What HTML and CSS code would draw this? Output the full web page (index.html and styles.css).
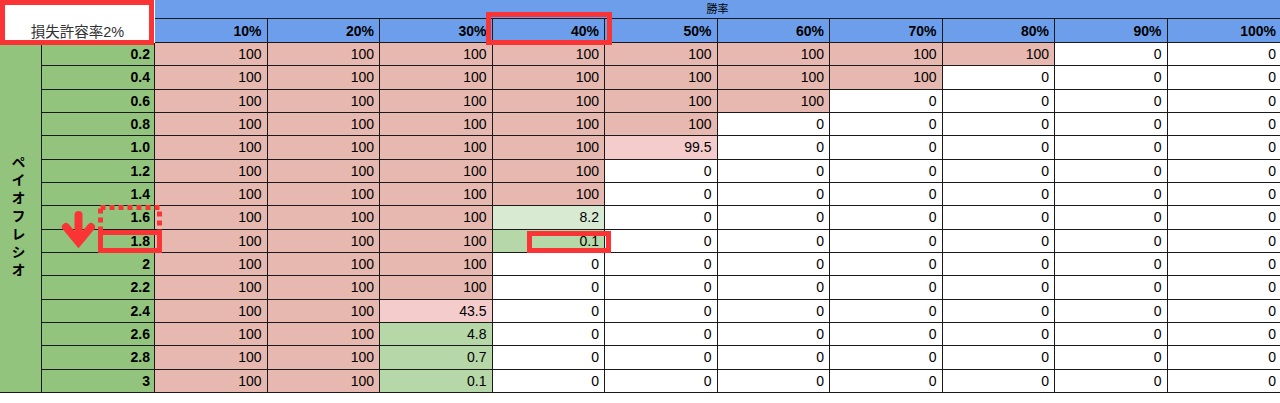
FILE: index.html
```html
<!DOCTYPE html>
<html lang="ja">
<head>
<meta charset="utf-8">
<title>損失許容率2%</title>
<link rel="stylesheet" href="styles.css">
</head>
<body>
<div class="sheet">
  <div class="grid">
    <div class="corner">損失許容率2%</div>
    <div class="title">勝率</div>
    <div class="side"><span class="side-text">ペイオフレシオ</span></div>

    <div class="h">10%</div><div class="h">20%</div><div class="h">30%</div><div class="h">40%</div><div class="h">50%</div><div class="h">60%</div><div class="h">70%</div><div class="h">80%</div><div class="h">90%</div><div class="h last">100%</div>

    <div class="lbl">0.2</div><div class="c p">100</div><div class="c p">100</div><div class="c p">100</div><div class="c p">100</div><div class="c p">100</div><div class="c p">100</div><div class="c p">100</div><div class="c p">100</div><div class="c">0</div><div class="c last">0</div>
    <div class="lbl">0.4</div><div class="c p">100</div><div class="c p">100</div><div class="c p">100</div><div class="c p">100</div><div class="c p">100</div><div class="c p">100</div><div class="c p">100</div><div class="c">0</div><div class="c">0</div><div class="c last">0</div>
    <div class="lbl">0.6</div><div class="c p">100</div><div class="c p">100</div><div class="c p">100</div><div class="c p">100</div><div class="c p">100</div><div class="c p">100</div><div class="c">0</div><div class="c">0</div><div class="c">0</div><div class="c last">0</div>
    <div class="lbl">0.8</div><div class="c p">100</div><div class="c p">100</div><div class="c p">100</div><div class="c p">100</div><div class="c p">100</div><div class="c">0</div><div class="c">0</div><div class="c">0</div><div class="c">0</div><div class="c last">0</div>
    <div class="lbl">1.0</div><div class="c p">100</div><div class="c p">100</div><div class="c p">100</div><div class="c p">100</div><div class="c lp">99.5</div><div class="c">0</div><div class="c">0</div><div class="c">0</div><div class="c">0</div><div class="c last">0</div>
    <div class="lbl">1.2</div><div class="c p">100</div><div class="c p">100</div><div class="c p">100</div><div class="c p">100</div><div class="c">0</div><div class="c">0</div><div class="c">0</div><div class="c">0</div><div class="c">0</div><div class="c last">0</div>
    <div class="lbl">1.4</div><div class="c p">100</div><div class="c p">100</div><div class="c p">100</div><div class="c p">100</div><div class="c">0</div><div class="c">0</div><div class="c">0</div><div class="c">0</div><div class="c">0</div><div class="c last">0</div>
    <div class="lbl">1.6</div><div class="c p">100</div><div class="c p">100</div><div class="c p">100</div><div class="c lg">8.2</div><div class="c">0</div><div class="c">0</div><div class="c">0</div><div class="c">0</div><div class="c">0</div><div class="c last">0</div>
    <div class="lbl">1.8</div><div class="c p">100</div><div class="c p">100</div><div class="c p">100</div><div class="c mg">0.1</div><div class="c">0</div><div class="c">0</div><div class="c">0</div><div class="c">0</div><div class="c">0</div><div class="c last">0</div>
    <div class="lbl">2</div><div class="c p">100</div><div class="c p">100</div><div class="c p">100</div><div class="c">0</div><div class="c">0</div><div class="c">0</div><div class="c">0</div><div class="c">0</div><div class="c">0</div><div class="c last">0</div>
    <div class="lbl">2.2</div><div class="c p">100</div><div class="c p">100</div><div class="c p">100</div><div class="c">0</div><div class="c">0</div><div class="c">0</div><div class="c">0</div><div class="c">0</div><div class="c">0</div><div class="c last">0</div>
    <div class="lbl">2.4</div><div class="c p">100</div><div class="c p">100</div><div class="c lp">43.5</div><div class="c">0</div><div class="c">0</div><div class="c">0</div><div class="c">0</div><div class="c">0</div><div class="c">0</div><div class="c last">0</div>
    <div class="lbl">2.6</div><div class="c p">100</div><div class="c p">100</div><div class="c mg">4.8</div><div class="c">0</div><div class="c">0</div><div class="c">0</div><div class="c">0</div><div class="c">0</div><div class="c">0</div><div class="c last">0</div>
    <div class="lbl">2.8</div><div class="c p">100</div><div class="c p">100</div><div class="c mg">0.7</div><div class="c">0</div><div class="c">0</div><div class="c">0</div><div class="c">0</div><div class="c">0</div><div class="c">0</div><div class="c last">0</div>
    <div class="lbl">3</div><div class="c p">100</div><div class="c p">100</div><div class="c mg">0.1</div><div class="c">0</div><div class="c">0</div><div class="c">0</div><div class="c">0</div><div class="c">0</div><div class="c">0</div><div class="c last">0</div>
  </div>

  <svg class="marks" width="1280" height="403" viewBox="0 0 1280 403" aria-hidden="true">
    <g fill="none" stroke="#fa3434" stroke-width="5">
      <rect x="2.5" y="2.5" width="149" height="40"/>
      <rect x="488.5" y="14.5" width="121" height="28"/>
      <rect x="100.5" y="207.5" width="59" height="43" stroke-dasharray="5 4"/>
      <rect x="100.5" y="232.5" width="59" height="18"/>
      <rect x="529.5" y="233.5" width="79" height="17"/>
    </g>
    <g fill="none" stroke="#fa3434" stroke-width="8" stroke-linecap="round" stroke-linejoin="miter">
      <line x1="78.5" y1="215" x2="78.5" y2="240"/>
      <polyline points="66,227 78.5,242 91,227"/>
    </g>
  </svg>
</div>
</body>
</html>
```

FILE: styles.css
```css
* { box-sizing: border-box; }

html, body {
  margin: 0;
  padding: 0;
  background: #ffffff;
}

body {
  font-family: "Liberation Sans", Arial, "Noto Sans CJK JP", sans-serif;
  color: #000000;
}

.sheet {
  position: relative;
  width: 1280px;
  height: 403px;
  overflow: hidden;
}

.grid {
  display: grid;
  width: 1280px;
  height: 393px;
  grid-template-columns: 42px 113px repeat(10, 1fr);
  grid-template-rows: 19px 24px repeat(15, 1fr);
}

.corner {
  grid-column: 1 / 3;
  grid-row: 1 / 3;
  background: #ffffff;
  display: flex;
  align-items: flex-end;
  justify-content: center;
  padding-bottom: 2px;
  font-family: "Liberation Sans", "Noto Sans CJK JP", sans-serif;
  font-size: 14.5px;
  color: #333333;
}

.title {
  grid-column: 3 / 13;
  grid-row: 1;
  background: #6d9eeb;
  border-bottom: 1px solid #1a1a1a;
  display: flex;
  align-items: center;
  justify-content: center;
  padding-bottom: 2px;
  font-family: "Noto Sans CJK JP", sans-serif;
  font-size: 11px;
  line-height: 1;
}

.side {
  grid-column: 1;
  grid-row: 3 / 18;
  background: #93c47d;
  border-right: 1px solid #1a1a1a;
  border-bottom: 1px solid #1a1a1a;
  display: flex;
  align-items: center;
  justify-content: center;
  padding-right: 4px;
}

.side-text {
  writing-mode: vertical-rl;
  text-orientation: upright;
  font-family: "Noto Sans CJK JP", sans-serif;
  font-weight: 700;
  font-size: 14px;
  letter-spacing: 4px;
  line-height: 1;
}

.h, .lbl, .c {
  display: flex;
  align-items: center;
  justify-content: flex-end;
  padding-right: 5px;
  font-size: 14px;
  line-height: 1;
  border-right: 1px solid #1a1a1a;
  border-bottom: 1px solid #1a1a1a;
  white-space: nowrap;
}

.h {
  background: #6d9eeb;
  font-weight: 700;
  padding-top: 1px;
}

.lbl {
  background: #93c47d;
  font-weight: 700;
  padding-right: 4px;
}

.c { background: #ffffff; }
.c.p { background: #e6b8af; }
.c.lp { background: #f4cccc; }
.c.lg { background: #d9ead3; }
.c.mg { background: #b6d7a8; }

.last {
  border-right: none;
  padding-right: 4px;
}

.marks {
  position: absolute;
  left: 0;
  top: 0;
  pointer-events: none;
}
```
